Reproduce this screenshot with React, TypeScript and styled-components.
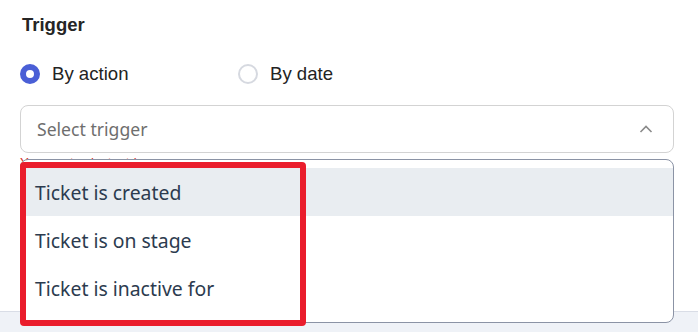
import styled, { createGlobalStyle } from 'styled-components';

const GlobalStyle = createGlobalStyle`
  html, body {
    margin: 0;
    padding: 0;
    background: #fff;
  }
  body {
    font-family: "Liberation Sans", Arial, sans-serif;
  }
`;

const Page = styled.div`
  display: flex;
  flex-direction: column;
  width: 698px;
  height: 332px;
  overflow: hidden;
`;

const Content = styled.div`
  flex: 1;
  padding: 14px 24px 0 20px;
`;

const Title = styled.h3`
  margin: 0 0 0 2px;
  font-size: 18.5px;
  line-height: 21px;
  font-weight: bold;
  color: #252525;
`;

const RadioGroup = styled.div`
  display: flex;
  margin-top: 29px;
  height: 20px;
`;

const RadioLabel = styled.label`
  display: flex;
  align-items: center;
  gap: 12px;
  width: 218px;
  font-size: 18.6px;
  color: #232323;
`;

const RadioDot = styled.span<{ $checked?: boolean }>`
  box-sizing: border-box;
  width: 20px;
  height: 20px;
  border-radius: 50%;
  background: #fff;
  border: ${p => (p.$checked ? '6px solid #4a5fd6' : '2px solid #d6d9e0')};
`;

const Field = styled.div`
  position: relative;
  margin-top: 21px;
`;

const SelectBox = styled.div`
  box-sizing: border-box;
  display: flex;
  align-items: center;
  justify-content: space-between;
  height: 48px;
  padding: 0 20px 0 16px;
  border: 1px solid #d3d3d3;
  border-radius: 8px;
  font-family: "Noto Sans", "Open Sans", sans-serif;
  font-size: 17.6px;
  color: #6e6e6e;
`;

const ErrorText = styled.div`
  margin-top: 2px;
  font-size: 13px;
  color: #d93025;
`;

const Menu = styled.ul`
  box-sizing: border-box;
  position: absolute;
  top: 54px;
  left: 0;
  right: 0;
  height: 164px;
  margin: 0;
  padding: 8px 0 10px;
  list-style: none;
  background: #fff;
  border: 1px solid #8b93a5;
  border-radius: 8px;
  z-index: 2;
`;

const MenuItem = styled.li<{ $active?: boolean }>`
  display: flex;
  align-items: center;
  height: 48px;
  padding: 0 14px;
  background: ${p => (p.$active ? '#e9edf1' : 'transparent')};
  font-family: "Noto Sans", "Open Sans", sans-serif;
  font-size: 19.4px;
  color: #2c3b4f;
`;

const Highlight = styled.div`
  position: absolute;
  top: 57px;
  left: 0;
  width: 286px;
  height: 164px;
  box-sizing: border-box;
  border: 6px solid #ea1d2c;
  border-radius: 4px;
  z-index: 3;
  pointer-events: none;
`;

const Footer = styled.div`
  height: 20px;
  background: #eff2f7;
  border-top: 1px solid #d9dde6;
`;

const Chevron = () => (
  <svg width="14" height="8" viewBox="0 0 14 8" fill="none">
    <path d="M1.5 7 L7 1.5 L12.5 7" stroke="#8a8a8a" strokeWidth="1.6" />
  </svg>
);

const options = ['Ticket is created', 'Ticket is on stage', 'Ticket is inactive for'];

export default function App() {
  return (
    <Page>
      <GlobalStyle />
      <Content>
        <Title>Trigger</Title>
        <RadioGroup>
          <RadioLabel>
            <RadioDot $checked />
            By action
          </RadioLabel>
          <RadioLabel>
            <RadioDot />
            By date
          </RadioLabel>
        </RadioGroup>
        <Field>
          <SelectBox>
            <span>Select trigger</span>
            <Chevron />
          </SelectBox>
          <ErrorText>You must select a trigger</ErrorText>
          <Menu>
            {options.map((o, i) => (
              <MenuItem key={o} $active={i === 0}>
                {o}
              </MenuItem>
            ))}
          </Menu>
          <Highlight />
        </Field>
      </Content>
      <Footer />
    </Page>
  );
}
